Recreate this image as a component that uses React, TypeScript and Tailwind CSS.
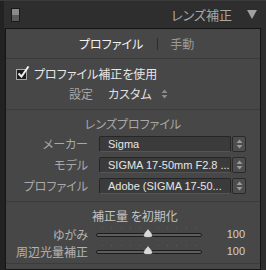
import React from 'react'

const jp = '[font-family:"Noto_Sans_CJK_JP","Liberation_Sans",sans-serif] [font-feature-settings:"palt"]'
const latin = '[font-family:"Liberation_Sans","Noto_Sans_CJK_JP",sans-serif]'

function UpDown({ className = '' }: { className?: string }) {
  return (
    <svg width="7" height="10" viewBox="0 0 7 10" className={className}>
      <path d="M3.5 0.5 L6.5 4 H0.5 Z" fill="currentColor" />
      <path d="M3.5 9.5 L6.5 6 H0.5 Z" fill="currentColor" />
    </svg>
  )
}

function Select({ value }: { value: string }) {
  return (
    <div className="flex h-[16px] w-[147px] gap-[1px]">
      <div className={`flex-1 flex items-center pl-[8px] bg-[#3b3b3b] border border-[#262626] border-b-[#555555] rounded-[2px] text-[11px] text-[#e6e6e6] leading-none whitespace-nowrap overflow-hidden ${latin}`}>
        {value}
      </div>
      <div className="w-[14px] flex items-center justify-center bg-[#4d4d4d] border border-[#2a2a2a] rounded-[2px] text-[#9a9a9a]">
        <UpDown />
      </div>
    </div>
  )
}

function Slider({ label }: { label: string }) {
  return (
    <div className="flex items-center h-[17px]">
      <div className="w-[82px] text-right text-[12px] text-[#b4b4b4] leading-none whitespace-nowrap">{label}</div>
      <div className="relative w-[106px] h-[17px] ml-[8px]">
        <div className="absolute left-[6px] right-[6px] top-[2px] flex justify-between">
          {Array.from({ length: 11 }).map((_, i) => (
            <div key={i} className="w-[1px] h-[1px] bg-[#5c5c5c]" />
          ))}
        </div>
        <div className="absolute left-0 right-0 top-[7px] h-[4px] rounded-full bg-[#5e5e5e] border border-[#1c1c1c]" />
        <svg width="10" height="10" viewBox="0 0 10 10" className="absolute left-[47px] top-[2px]">
          <path d="M5 0.5 C6 2.5 9.5 5 9.5 7.5 C9.5 9 8 9.5 5 9.5 C2 9.5 0.5 9 0.5 7.5 C0.5 5 4 2.5 5 0.5 Z" fill="#d9d9d9" stroke="#2a2a2a" strokeWidth="0.6" />
        </svg>
      </div>
      <div className={`ml-auto pr-[15px] text-[11px] text-[#d0d0d0] leading-none ${latin}`}>100</div>
    </div>
  )
}

export default function App() {
  return (
    <div className={`w-[266px] h-[270px] overflow-hidden bg-[#2e2e2e] flex flex-col border-t border-[#3a3a3a] ${jp}`}>
      <div className="h-[27px] flex items-center pl-[7px] pr-[9px] border-l-[4px] border-[#222222]">
        <div className="w-[9px] h-[14px] border border-[#1a1a1a] bg-[#5a5a5a] flex flex-col">
          <div className="h-[6px] bg-[#8a8a8a]" />
        </div>
        <div className="ml-auto text-[13px] text-[#a8a8a8] leading-none">レンズ補正</div>
        <svg width="10" height="9" viewBox="0 0 10 9" className="ml-[15px]">
          <path d="M0 0 H10 L5 9 Z" fill="#a0a0a0" />
        </svg>
      </div>

      <div className="flex flex-1">
        <div className="w-[5px] bg-[#222222]" />
        <div className="w-[256px] bg-[#474747] border border-[#151515] flex flex-col">
          <div className="h-[30px] shrink-0 flex items-center pl-[73px] text-[12px] leading-none border-b border-[#3a3a3a]">
            <span className="text-[#f2f2f2]">プロファイル</span>
            <span className="w-[1px] h-[12px] bg-[#2c2c2c] ml-[14px] mr-[12px]" />
            <span className="text-[#9a9a9a]">手動</span>
          </div>

          <div className="h-[51px] shrink-0 flex flex-col border-b border-[#3c3c3c]">
            <div className="h-[28px] flex items-center pl-[10px] pt-[2px]">
              <div className="w-[11px] h-[11px] bg-[#1e1e1e] border border-[#aaaaaa] relative">
                <svg width="13" height="12" viewBox="0 0 13 12" className="absolute left-[0px] top-[-4px]">
                  <path d="M1.5 7.5 L4.5 10.5 L11.5 0.5" fill="none" stroke="#f0f0f0" strokeWidth="2" />
                </svg>
              </div>
              <span className="ml-[7px] text-[12px] text-[#e6e6e6] leading-none">プロファイル補正を使用</span>
            </div>
            <div className="h-[14px] flex items-center text-[12px] leading-none">
              <span className="ml-[63px] text-[#a8a8a8]">設定</span>
              <span className="ml-[15px] text-[#e0e0e0]">カスタム</span>
              <UpDown className="ml-[9px] text-[#8c8c8c]" />
            </div>
          </div>

          <div className="h-[92px] shrink-0 flex flex-col border-b border-[#3c3c3c]">
            <div className="h-[26px] flex items-center justify-center pt-[1px] text-[12px] text-[#a8a8a8] leading-none">レンズプロファイル</div>
            <div className="flex flex-col gap-[5px]">
              {[
                ['メーカー', 'Sigma'],
                ['モデル', 'SIGMA 17-50mm F2.8 ...'],
                ['プロファイル', 'Adobe (SIGMA 17-50...'],
              ].map(([l, v]) => (
                <div key={l} className="flex items-center">
                  <div className="w-[82px] text-right text-[12px] text-[#a8a8a8] leading-none">{l}</div>
                  <div className="ml-[11px]">
                    <Select value={v} />
                  </div>
                </div>
              ))}
            </div>
          </div>

          <div className="h-[62px] shrink-0 flex flex-col border-b border-[#3c3c3c]">
            <div className="h-[24px] flex items-center justify-center pt-[4px] text-[12px] text-[#c4c4c4] leading-none pl-[4px]">補正量 を初期化</div>
            <Slider label="ゆがみ" />
            <Slider label="周辺光量補正" />
          </div>
        </div>
      </div>
    </div>
  )
}
